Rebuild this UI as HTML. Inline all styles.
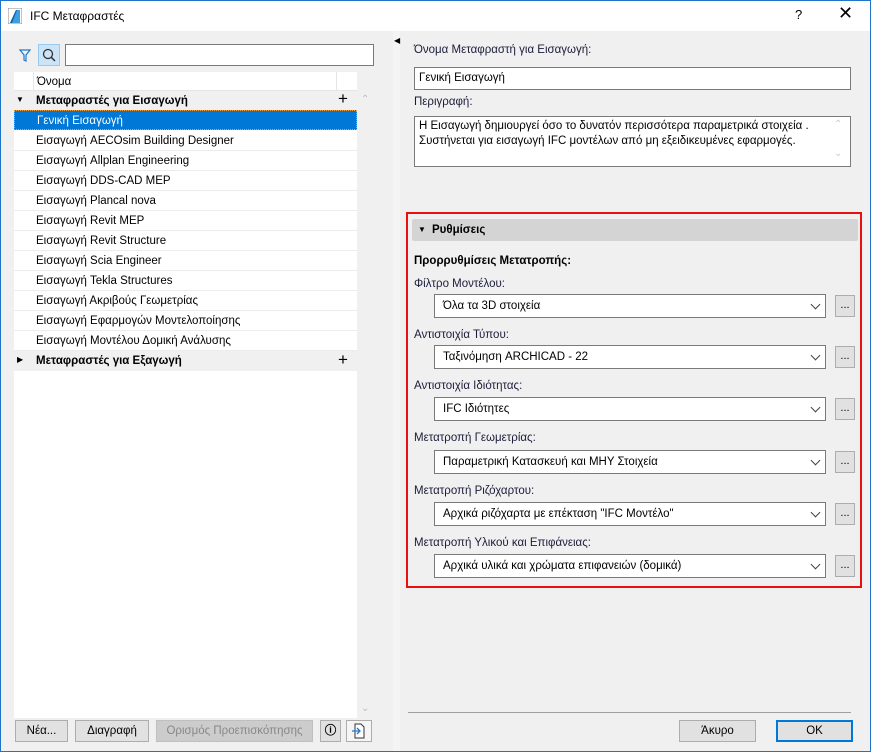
<!DOCTYPE html>
<html><head><meta charset="utf-8"><style>
*{box-sizing:border-box;margin:0;padding:0}
body{width:871px;height:752px;overflow:hidden;font-family:"Liberation Sans",sans-serif;font-size:11.5px;color:#000;background:#f0f0f0;position:relative}
.a{position:absolute}
.win{left:0;top:0;width:871px;height:752px;border:1px solid #1e74c9;background:#f0f0f0}
.title{left:1px;top:1px;width:869px;height:30px;background:#fff}
.row{position:absolute;left:14px;width:343px;height:20px;line-height:21px;padding-left:22px;border-bottom:1px solid #ececec;white-space:nowrap}
.lbl{position:absolute;left:414px;color:#1c1c3a;font-size:11.5px}
.sel{position:absolute;left:434px;width:392px;height:24px;border:1px solid #7a7a7a;background:#fff;line-height:22px;padding-left:8px}
.sel:after{content:"";position:absolute;right:6px;top:6px;width:6px;height:6px;border-right:1px solid #444;border-bottom:1px solid #444;transform:rotate(45deg)}
.dots{position:absolute;left:835px;width:20px;height:22px;border:1px solid #adadad;background:#e1e1e1;text-align:center;line-height:18px;font-size:11px}
.btn{position:absolute;height:22px;border:1px solid #adadad;background:#e1e1e1;text-align:center;line-height:20px}
</style></head><body>
<div class="a win"></div>
<div class="a title"></div>
<svg class="a" style="left:8px;top:8px" width="14" height="16" viewBox="0 0 14 16"><rect x="0" y="0" width="14" height="16" fill="#fff" stroke="#888"/><path d="M2 15 L8 2 L12 2 L12 15 Z" fill="#3aa0e0"/><path d="M2 15 L8 2 L9 2 L4 15Z" fill="#1060a0"/></svg>
<div class="a" style="left:30px;top:9px;font-size:12px">IFC Μεταφραστές</div>
<div class="a" style="left:795px;top:7px;font-size:13px">?</div>
<div class="a" style="left:838px;top:3px;font-size:18px;font-weight:300">✕</div>

<svg class="a" style="left:19px;top:49px" width="12" height="13" viewBox="0 0 12 13"><path d="M1 1 H11 L7 6 V12 L5 11 V6 Z" fill="none" stroke="#1e7ad0" stroke-width="1.2"/></svg>
<div class="a" style="left:38px;top:44px;width:22px;height:22px;background:#cce4f7;border:1px solid #99c9ef"></div>
<svg class="a" style="left:41px;top:47px" width="16" height="16" viewBox="0 0 16 16"><circle cx="7" cy="7" r="4.5" fill="none" stroke="#333" stroke-width="1.3"/><path d="M10.3 10.3 L14 14" stroke="#333" stroke-width="1.5"/></svg>
<div class="a" style="left:65px;top:44px;width:309px;height:22px;border:1px solid #7a7a7a;background:#fff"></div>
<div class="a" style="left:14px;top:72px;width:343px;height:646px;background:#fff"></div>
<div class="a" style="left:14px;top:72px;width:343px;height:19px;border-bottom:1px solid #e5e5e5"></div>
<div class="a" style="left:33px;top:72px;width:1px;height:19px;background:#e5e5e5"></div>
<div class="a" style="left:336px;top:72px;width:1px;height:19px;background:#e5e5e5"></div>
<div class="a" style="left:37px;top:76px">Όνομα</div>
<div class="a" style="left:14px;top:91px;width:343px;height:19px;background:#f0f0f0"></div>
<div class="a" style="left:16px;top:95px;font-size:8px">▼</div>
<div class="a" style="left:36px;top:95px;font-weight:bold">Μεταφραστές για Εισαγωγή</div>
<div class="a" style="left:338px;top:89px;font-size:17px">+</div>
<div class="row" style="top:110px;background:#0078d7;color:#fff;border:1px dotted #f0a040">Γενική Εισαγωγή</div>
<div class="row" style="top:131px">Εισαγωγή AECOsim Building Designer</div>
<div class="row" style="top:151px">Εισαγωγή Allplan Engineering</div>
<div class="row" style="top:171px">Εισαγωγή DDS-CAD MEP</div>
<div class="row" style="top:191px">Εισαγωγή Plancal nova</div>
<div class="row" style="top:211px">Εισαγωγή Revit MEP</div>
<div class="row" style="top:231px">Εισαγωγή Revit Structure</div>
<div class="row" style="top:251px">Εισαγωγή Scia Engineer</div>
<div class="row" style="top:271px">Εισαγωγή Tekla Structures</div>
<div class="row" style="top:291px">Εισαγωγή Ακριβούς Γεωμετρίας</div>
<div class="row" style="top:311px">Εισαγωγή Εφαρμογών Μοντελοποίησης</div>
<div class="row" style="top:331px">Εισαγωγή Μοντέλου Δομική Ανάλυσης</div>
<div class="a" style="left:14px;top:351px;width:343px;height:20px;background:#f0f0f0"></div>
<div class="a" style="left:17px;top:355px;font-size:8px">▶</div>
<div class="a" style="left:36px;top:355px;font-weight:bold">Μεταφραστές για Εξαγωγή</div>
<div class="a" style="left:338px;top:350px;font-size:17px">+</div>
<div class="a" style="left:361px;top:94px;color:#bbb;font-size:10px">⌃</div>
<div class="a" style="left:361px;top:703px;color:#bbb;font-size:10px">⌄</div>
<div class="btn" style="left:15px;top:720px;width:53px">Νέα...</div>
<div class="btn" style="left:75px;top:720px;width:74px">Διαγραφή</div>
<div class="btn" style="left:156px;top:720px;width:157px;background:#ccc;border-color:#bfbfbf;color:#888">Ορισμός Προεπισκόπησης</div>
<div class="btn" style="left:320px;top:720px;width:21px;font-weight:bold">ⓘ</div>
<div class="btn" style="left:346px;top:720px;width:26px;background:#f5f5f5"></div>
<svg class="a" style="left:351px;top:723px" width="16" height="16" viewBox="0 0 16 16"><path d="M4 1 H10 L13 4 V15 H4 Z" fill="#fff" stroke="#333"/><path d="M1 8 H9 M6 5 L9 8 L6 11" stroke="#1e7ad0" fill="none" stroke-width="1.3"/></svg>

<div class="a" style="left:393px;top:31px;width:7px;height:720px;background:#f4f4f4"></div>
<div class="a" style="left:394px;top:36px;font-size:8px">◀</div>

<div class="lbl" style="top:44px">Όνομα Μεταφραστή για Εισαγωγή:</div>
<div class="a" style="left:414px;top:67px;width:437px;height:23px;border:1px solid #7a7a7a;background:#fff;padding-left:4px;line-height:21px">Γενική Εισαγωγή</div>
<div class="lbl" style="top:96px">Περιγραφή:</div>
<div class="a" style="left:414px;top:116px;width:437px;height:51px;border:1px solid #7a7a7a;background:#fff;padding:2px 4px;line-height:15px">Η Εισαγωγή δημιουργεί όσο το δυνατόν περισσότερα παραμετρικά στοιχεία .<br>Συστήνεται για εισαγωγή IFC μοντέλων από μη εξειδικευμένες εφαρμογές.</div>
<div class="a" style="left:834px;top:119px;color:#ccc;font-size:10px">⌃</div>
<div class="a" style="left:834px;top:148px;color:#ccc;font-size:10px">⌄</div>

<div class="a" style="left:406px;top:212px;width:456px;height:376px;border:2px solid #e81010"></div>
<div class="a" style="left:412px;top:219px;width:446px;height:22px;background:#d4d4d4;border-radius:2px"></div>
<div class="a" style="left:418px;top:225px;font-size:8px">▼</div>
<div class="a" style="left:432px;top:224px;font-weight:bold">Ρυθμίσεις</div>
<div class="a" style="left:414px;top:255px;font-weight:bold">Προρρυθμίσεις Μετατροπής:</div>

<div class="lbl" style="top:278px">Φίλτρο Μοντέλου:</div>
<div class="sel" style="top:294px">Όλα τα 3D στοιχεία</div><div class="dots" style="top:295px">...</div>
<div class="lbl" style="top:329px">Αντιστοιχία Τύπου:</div>
<div class="sel" style="top:345px">Ταξινόμηση ARCHICAD - 22</div><div class="dots" style="top:346px">...</div>
<div class="lbl" style="top:380px">Αντιστοιχία Ιδιότητας:</div>
<div class="sel" style="top:397px">IFC Ιδιότητες</div><div class="dots" style="top:398px">...</div>
<div class="lbl" style="top:432px">Μετατροπή Γεωμετρίας:</div>
<div class="sel" style="top:450px">Παραμετρική Κατασκευή και ΜΗΥ Στοιχεία</div><div class="dots" style="top:451px">...</div>
<div class="lbl" style="top:485px">Μετατροπή Ριζόχαρτου:</div>
<div class="sel" style="top:502px">Αρχικά ριζόχαρτα με επέκταση "IFC Μοντέλο"</div><div class="dots" style="top:503px">...</div>
<div class="lbl" style="top:537px">Μετατροπή Υλικού και Επιφάνειας:</div>
<div class="sel" style="top:554px">Αρχικά υλικά και χρώματα επιφανειών (δομικά)</div><div class="dots" style="top:555px">...</div>

<div class="a" style="left:408px;top:712px;width:443px;height:1px;background:#a0a0a0"></div>
<div class="btn" style="left:679px;top:720px;width:77px">Άκυρο</div>
<div class="btn" style="left:776px;top:720px;width:77px;border:2px solid #0078d7;line-height:18px">OK</div>
</body></html>
